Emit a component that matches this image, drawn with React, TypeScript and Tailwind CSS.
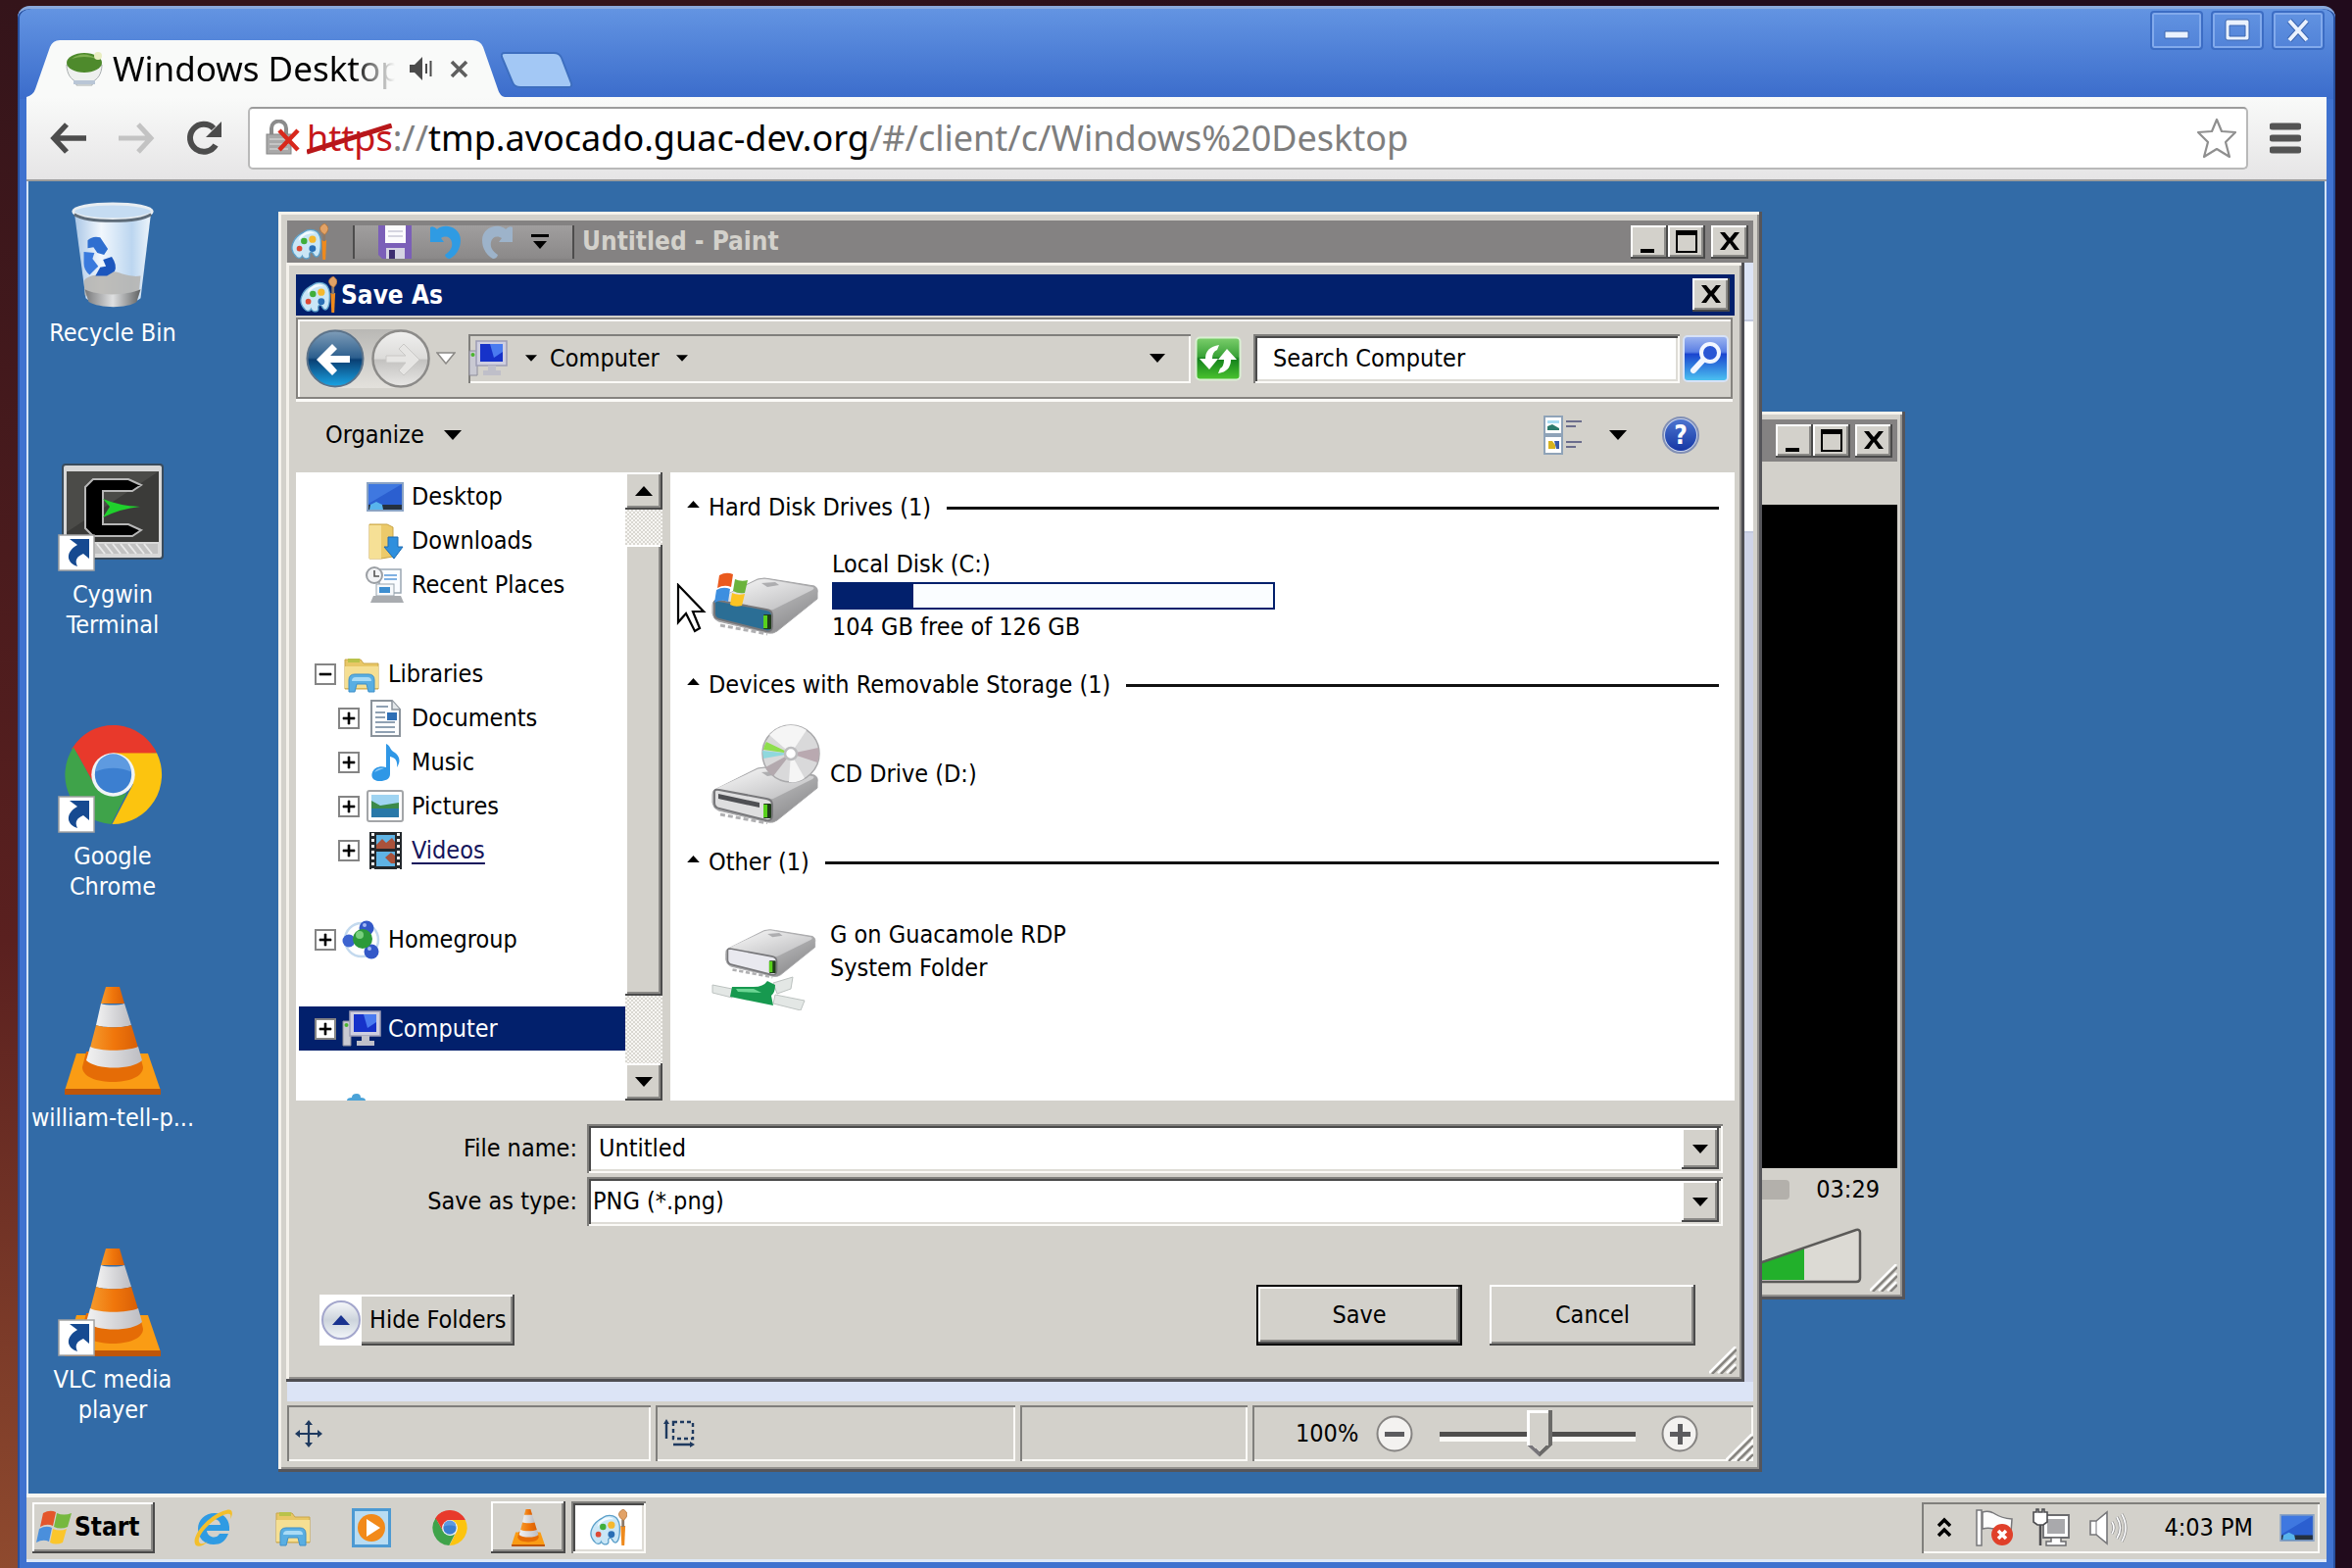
import React from "react";

const RAISED =
  "bg-[#d3d1cb] shadow-[inset_-2px_-2px_0_#4a4a4a,inset_2px_2px_0_#ffffff,inset_-4px_-4px_0_#8a8986]";
const SUNKEN = "shadow-[inset_2px_2px_0_#807f7c,inset_-2px_-2px_0_#fbfaf7]";
const FIELD =
  "bg-white shadow-[inset_2px_2px_0_#807f7c,inset_-2px_-2px_0_#fbfaf7,inset_4px_4px_0_#4a4a4a,inset_-4px_-4px_0_#dedcd6]";

function Caret({ up = false, w = 18, color = "#000" }: { up?: boolean; w?: number; color?: string }) {
  return (
    <svg width={w} height={Math.round(w * 0.56)} viewBox="0 0 18 10" className="shrink-0" aria-hidden="true">
      <path d={up ? "M9 0 18 10H0z" : "M0 0h18L9 10z"} fill={color} />
    </svg>
  );
}

function Grip() {
  return (
    <svg width="28" height="28" viewBox="0 0 28 28" aria-hidden="true">
      <g strokeWidth="2.4">
        <path d="M0 27 27 0M9 27 27 9M18 27 27 18" stroke="#fff" />
        <path d="M3 28 28 3M12 28 28 12M21 28 28 21" stroke="#85837f" />
      </g>
    </svg>
  );
}

function Palette({ size = 40 }: { size?: number }) {
  return (
    <svg width={size} height={size} viewBox="0 0 40 40" aria-hidden="true" className="shrink-0">
      <path
        d="M14 9c4-3 10-3 14 0 3 3 4 7 4 12s0 11-3 14c-2 2-4 0-5-2-1-2-3-3-4-1s1 4-1 5c-3 2-6 0-7-2-1 3-5 3-7 0C1 31 0 26 2 21 4 15 8 12 14 9z"
        fill="#c9e6f6"
        stroke="#5b9fc9"
        strokeWidth="1.4"
      />
      <path d="M13 11c4-3 9-3 13 0-6-1-13 1-18 8 0-3 2-6 5-8z" fill="#f3fbff" />
      <circle cx="14" cy="19" r="3.4" fill="#3fae3a" />
      <circle cx="23" cy="17" r="3.8" fill="#f5b82e" />
      <circle cx="9" cy="27" r="3" fill="#dd4a35" />
      <circle cx="23" cy="27" r="3.600" fill="#2a6fb5" />
      <path d="M33 18h5l-1 21h-3z" fill="#ee8a1d" />
      <path d="M34 11h3v8h-3z" fill="#8c7a6a" />
      <path d="M31 5c1-3 3-4 5-5 2 2 4 3 4 6-1 4-3 5-4 6-3-2-5-4-5-7z" fill="#e2a266" stroke="#b06f32" strokeWidth=".8" />
    </svg>
  );
}

function RecycleBin() {
  return (
    <svg width="86" height="108" viewBox="0 0 86 110" aria-hidden="true">
      <defs>
        <linearGradient id="bin" x1="0" x2="1">
          <stop offset="0" stopColor="#a9c6e6" />
          <stop offset=".35" stopColor="#f1f7fd" />
          <stop offset=".75" stopColor="#bcd6f0" />
          <stop offset="1" stopColor="#eef5fb" />
        </linearGradient>
        <linearGradient id="binFoot" x1="0" x2="1">
          <stop offset="0" stopColor="#77787a" />
          <stop offset=".5" stopColor="#dfe0e1" />
          <stop offset="1" stopColor="#606263" />
        </linearGradient>
      </defs>
      <path d="M3 10h80L72 100c-9 9-48 9-57 0z" fill="url(#bin)" />
      <path d="M13 82c6-8 18-5 26-9 9-3 16 6 33 4l-2 20c-10 6-46 6-56 0z" fill="#b5b3ae" opacity=".85" />
      <path d="M14 91c14 7 42 7 58 0l-4 13c-10 7-38 7-50 0z" fill="url(#binFoot)" />
      <ellipse cx="43" cy="10" rx="41" ry="8" fill="#c5dcf2" stroke="#e8edf1" strokeWidth="3" />
      <path d="M3 13c14 9 66 9 80 0" fill="none" stroke="#5d6b78" strokeWidth="3" />
      <path d="M17 40q5-5 13-3l8 12-4 6-7-2-4-6-6 1z" fill="#2f6fd0" />
      <path d="M13 52l11 1-2 6 6 8-9 9q-6-5-6-12z" fill="#3a7add" />
      <path d="M33 60l9-3q6 9 3 15l-8 5H25l5-9 6-1z" fill="#1c56bd" />
    </svg>
  );
}

function ShortcutBadge() {
  return (
    <svg width="38" height="38" viewBox="0 0 38 38" className="absolute bottom-0 left-0" aria-hidden="true">
      <rect x="1" y="1" width="36" height="36" fill="#fff" stroke="#a3a3a3" strokeWidth="1.5" />
      <path d="M12 5h20v20l-6-5c-7 3-9 7-6 13-10-3-14-14 0-22z" fill="#164a91" />
    </svg>
  );
}

function CygwinIcon() {
  return (
    <svg width="104" height="98" viewBox="0 0 104 98" aria-hidden="true">
      <rect x="1" y="1" width="102" height="96" rx="3" fill="#d8d8d8" stroke="#3a4b5c" strokeWidth="2" />
      <rect x="5" y="8" width="94" height="72" fill="#3b3b39" />
      <path d="M5 8h94L5 70z" fill="#4b4b48" />
      <path d="M34 82h64v10H34z" fill="#c2c2c2" />
      <path d="M36 82l8 10m0-10 8 10m0-10 8 10m0-10 8 10m0-10 8 10m0-10 8 10m0-10 8 10" stroke="#e9e9e9" strokeWidth="2" />
      <path d="M32 16h36l13 6-9 6H42v34h26l13 6-9 6H32l-8-8V24z" fill="#000" stroke="#b7b7b7" strokeWidth="2" />
      <path d="M42 36q16 7 38 8-20 2-38 11l7-11z" fill="#1fd12c" />
    </svg>
  );
}

function ChromeLogo({ size }: { size: number }) {
  return (
    <svg width={size} height={size} viewBox="0 0 100 100" aria-hidden="true">
      <path d="M50 50 8 24A50 50 0 0 1 93 26z" fill="#e8392b" />
      <path d="M50 28H94A50 50 0 0 1 49 100L70 60z" fill="#fcc40f" />
      <path d="M10 22 31 60C40 72 52 74 64 68L48 100A50 50 0 0 1 10 22z" fill="#3fa34a" />
      <path d="M10 22 31 60 29 44 50 28H94C84 8 66 0 50 0 34 0 18 8 10 22z" fill="#e8392b" />
      <circle cx="50" cy="50" r="22" fill="#f0f4f6" />
      <circle cx="50" cy="50" r="18.500" fill="#3c7fd0" />
      <path d="M32 47a18 18 0 0 1 36 0c-10-5-26-5-36 0z" fill="#5e9ae0" />
    </svg>
  );
}

function Cone({ w, h, id }: { w: number; h: number; id: string }) {
  return (
    <svg width={w} height={h} viewBox="0 0 98 110" aria-hidden="true">
      <defs>
        <linearGradient id={`${id}o`} x1="0" x2="1">
          <stop offset="0" stopColor="#f59a2c" />
          <stop offset=".5" stopColor="#f0760b" />
          <stop offset="1" stopColor="#d95f06" />
        </linearGradient>
        <linearGradient id={`${id}w`} x1="0" x2="1">
          <stop offset="0" stopColor="#f2f2f2" />
          <stop offset="1" stopColor="#bdbdc2" />
        </linearGradient>
      </defs>
      <path d="M12 68h73l13 38H0z" fill="#fa9c14" />
      <path d="M0 104h98v6H0z" fill="#bf5609" />
      <path d="M18 82c0 20 62 20 62 0l-4-16H22z" fill="#e56c06" />
      <path d="M42 0h14l5 17H37z" fill={`url(#${id}o)`} />
      <path d="M37 17c5 2 19 2 24 0l7 22c-8 3-29 3-36 0z" fill={`url(#${id}w)`} />
      <path d="M32 39c7 3 28 3 36 0l7 23c-12 5-39 5-49 0z" fill={`url(#${id}o)`} />
      <path d="M26 61c10 5 37 5 49 0l4 14c-10 10-47 10-57 0z" fill={`url(#${id}w)`} />
    </svg>
  );
}

function FolderGlyph({ kind }: { kind: "lib" | "down" }) {
  return (
    <svg width="40" height="40" viewBox="0 0 40 40" aria-hidden="true">
      {kind === "lib" ? (
        <>
          <path d="M3 5h16l3 4h15v26H3z" fill="#e8c766" stroke="#c9a548" />
          <path d="M6 4h12v4H6z" fill="#b9c24a" />
          <path d="M3 12h34v22H3z" fill="#f5df93" />
          <path d="M7 38V26q0-6 6-6h14q6 0 6 6v12h-6l-2-8H15l-2 8z" fill="#59aee2" stroke="#3c8fc9" />
          <path d="M10 27q0-4 4-4h12q4 0 4 4z" fill="#a9dbf6" />
        </>
      ) : (
        <>
          <path d="M4 3h18l6 3v30l-12 2H4z" fill="#ecca6a" stroke="#c9a548" />
          <path d="M4 4h12v34H4z" fill="#f6e096" />
          <path d="M23 16h10v10h5l-9 12-10-12h4z" fill="#2f8fdd" stroke="#1c6bb3" />
        </>
      )}
    </svg>
  );
}

function MonitorGlyph({ w = 38, h = 30 }: { w?: number; h?: number }) {
  return (
    <svg width={w} height={h} viewBox="0 0 38 30" aria-hidden="true">
      <rect x="1" y="1" width="36" height="28" fill="#2b5fd0" stroke="#8aa3c4" strokeWidth="2" />
      <path d="M2 2h34L2 22z" fill="#3f78e0" />
      <path d="M2 23h34v5H2z" fill="#25313f" />
      <path d="M3 28l1-5 6-3 6 3 1 5z" fill="#58b4ec" />
    </svg>
  );
}

function RecentGlyph() {
  return (
    <svg width="40" height="38" viewBox="0 0 40 38" aria-hidden="true">
      <path d="M14 3h22v24H14z" fill="#fafcff" stroke="#9aa6b3" strokeWidth="1.500" />
      <path d="M19 9h13M19 13h13" stroke="#7fb0e2" strokeWidth="2" />
      <rect x="11" y="18" width="18" height="12" fill="#f7f9fb" stroke="#98a4ae" />
      <rect x="14" y="21" width="11" height="6" fill="#3d8ed0" />
      <path d="M8 30h28l3 7H5z" fill="#a9acb0" />
      <circle cx="9" cy="9" r="8" fill="#f3f4f6" stroke="#9b9fa4" strokeWidth="2" />
      <path d="M9 4v6h5" stroke="#555" strokeWidth="1.600" fill="none" />
    </svg>
  );
}

function ComputerGlyph() {
  return (
    <svg width="40" height="40" viewBox="0 0 40 40" aria-hidden="true">
      <path d="M1 12h8v25H1z" fill="#c9c9d2" stroke="#8e8e9c" />
      <circle cx="4.500" cy="16" r="2" fill="#4bb52f" />
      <rect x="8" y="2" width="31" height="25" fill="#cfcfe0" stroke="#9d9db5" strokeWidth="1.500" />
      <rect x="12" y="5" width="23" height="18" fill="#1632c9" />
      <path d="M22 5h13v8l-9 6z" fill="#4a7bf0" />
      <path d="M20 27h8v5h5v5H15v-5h5z" fill="#bfbfc9" />
    </svg>
  );
}

function DocGlyph() {
  return (
    <svg width="40" height="40" viewBox="0 0 40 40" aria-hidden="true">
      <path d="M6 2h21l8 9v27H6z" fill="#fcfdfe" stroke="#8b939b" strokeWidth="2" />
      <path d="M27 2v9h8" fill="#e3e7ea" stroke="#8b939b" strokeWidth="1.500" />
      <path d="M11 8h12M10 14h10M10 19h10M10 24h20M10 29h20M10 34h20" stroke="#8fa1b3" strokeWidth="1.800" />
      <rect x="22" y="14" width="10" height="8" fill="#2f6fb5" />
    </svg>
  );
}

function MusicGlyph() {
  return (
    <svg width="40" height="40" viewBox="0 0 40 40" aria-hidden="true">
      <path d="M21 1c5 2 3 6 9 9 5 4 6 9 2 15 1-7-2-10-7-11v18c0 5-5 7-10 7-7 0-10-4-8-9 2-5 8-7 14-5z" fill="#2f97e6" />
      <path d="M9 30c2-4 6-5 10-4-4 1-7 3-10 4z" fill="#8ccaf7" />
    </svg>
  );
}

function PictureGlyph() {
  return (
    <svg width="40" height="34" viewBox="0 0 40 34" aria-hidden="true">
      <rect x="2" y="1" width="36" height="31" rx="2" fill="#fcfcfc" stroke="#a3a5a8" strokeWidth="2" />
      <rect x="6" y="5" width="28" height="23" fill="#9fd4f2" />
      <path d="M6 11l9 5 19-3v7H6z" fill="#3b8a4a" />
      <path d="M6 19h28v9H6z" fill="#2878a8" />
    </svg>
  );
}

function VideoGlyph() {
  return (
    <svg width="40" height="40" viewBox="0 0 40 40" aria-hidden="true">
      <rect x="4" y="1" width="33" height="38" fill="#23282c" />
      <rect x="11" y="4" width="19" height="14" fill="#5fb3e4" />
      <path d="M11 14l6-6 4 4 6-5 3 4v7H11z" fill="#a9523b" />
      <rect x="11" y="21" width="19" height="15" fill="#5fb3e4" />
      <path d="M20 27l6-5 4 3v8h-4z" fill="#a9523b" />
      <path d="M7.500 2v37M33.500 2v37" stroke="#f3f3f3" strokeWidth="3" strokeDasharray="3 3" />
    </svg>
  );
}

function HomegroupGlyph() {
  return (
    <svg width="40" height="40" viewBox="0 0 40 40" aria-hidden="true">
      <circle cx="20" cy="20" r="17" fill="none" stroke="#c3d9ee" strokeWidth="2.500" />
      <circle cx="25" cy="8" r="7.500" fill="#3358c8" />
      <circle cx="7" cy="21" r="6.500" fill="#3c63cf" />
      <circle cx="30" cy="32" r="7.500" fill="#3358c8" />
      <circle cx="21" cy="19" r="10" fill="#2c9a39" />
      <circle cx="18" cy="15" r="4" fill="#79d07e" />
      <circle cx="23" cy="5" r="2" fill="#a3b8f4" />
      <circle cx="28" cy="29" r="2" fill="#a3b8f4" />
    </svg>
  );
}

function DriveBody({ id, face }: { id: string; face: string }) {
  return (
    <>
      <defs>
        <linearGradient id={`${id}t`} x1="0" y1="0" x2="1" y2="1">
          <stop offset="0" stopColor="#fafafa" />
          <stop offset="1" stopColor="#b9b9bb" />
        </linearGradient>
        <linearGradient id={`${id}s`} x1="0" y1="0" x2="1" y2="1">
          <stop offset="0" stopColor="#e4e4e5" />
          <stop offset="1" stopColor="#7e7e80" />
        </linearGradient>
      </defs>
      <path d="M4 25 48 3q7-2 14 0l44 7q4 2 3 7v6L68 56q-4 3-9 2L8 46q-5-2-6-8v-8q0-4 2-5z" fill={`url(#${id}s)`} stroke="#a3a3a5" strokeWidth="1" />
      <path d="M5 24 48 4q7-2 14 0l42 7q3 1 0 3L66 33q-3 2-7 1z" fill={`url(#${id}t)`} />
      <path d="M52 7l14-1 4 3-12 2z" fill="#8b8b8d" opacity=".6" />
      <path d="M4 27q0-3 5-2l48 9q6 1 6 6v11q0 6-6 5L9 44q-5-1-5-6z" fill={face} stroke="#77777a" strokeWidth="2" />
      <path d="M10 50l48 9" stroke="#b0b0b2" strokeWidth="3" strokeDasharray="5 3" />
      <rect x="54" y="39" width="8" height="15" rx="1" fill="#1f3b1a" />
      <rect x="54" y="40" width="4" height="13" fill="#58d11c" />
    </>
  );
}

function LocalDiskIcon() {
  return (
    <svg width="112" height="66" viewBox="0 -4 112 66" aria-hidden="true">
      <DriveBody id="hd" face="#2b6e95" />
      <path d="M9 -1q7-4 14-1l-2 13q-7-3-14 1z" fill="#ea5a1e" />
      <path d="M25 3q6 3 13 1l-3 13q-7 1-12-2z" fill="#6bb33c" />
      <path d="M6 14q7-4 14-1l-2 13q-7-3-14 1z" fill="#3d8fe0" />
      <path d="M22 17q6 3 13 1l-3 12q-7 2-12-1z" fill="#fcc423" />
    </svg>
  );
}

function CdIcon() {
  return (
    <svg width="112" height="102" viewBox="0 0 112 102" aria-hidden="true">
      <g transform="translate(0 42)">
        <DriveBody id="cd" face="#dededf" />
        <path d="M8 29l42 9v5L8 34z" fill="#4f5054" />
      </g>
      <circle cx="82" cy="30" r="29" fill="#d9d9da" stroke="#a9a9ab" strokeWidth="1.500" />
      <path d="M82 30 60 11A29 29 0 0 1 98 6z" fill="#f5f5f5" />
      <path d="M82 30 54 26q1-5 3-8z" fill="#8ede4c" />
      <path d="M82 30 53 27l1 8z" fill="#8fd8dd" />
      <path d="M82 30 56 44q3 6 8 9z" fill="#b3a9ae" />
      <path d="M82 30 110 24q2 8-1 15z" fill="#b9a9b0" />
      <path d="M82 30 80 59q10 1 16-4z" fill="#f5f5f5" />
      <circle cx="82" cy="30" r="6" fill="#fff" stroke="#bdbdbf" strokeWidth="2.500" />
    </svg>
  );
}

function NetDriveIcon() {
  return (
    <svg width="112" height="84" viewBox="0 0 112 84" aria-hidden="true">
      <path d="M2 58l20 4v9L2 66zM66 68l30 6-4 10-28-7zM64 56l20-6-2 12-14 5z" fill="#e3e7e5" stroke="#bcc2c0" />
      <path d="M22 60h22q10 0 14-6l8 4q0 8-4 11l2 10-44-9z" fill="#17994f" />
      <path d="M26 62h18l8 4-24-1z" fill="#6bd694" />
      <g transform="translate(14 0) scale(.85)">
        <DriveBody id="nd" face="#e9e9ef" />
      </g>
    </svg>
  );
}

type WinButtonKind = "min" | "max" | "close";

function WinButton({ kind }: { kind: WinButtonKind }) {
  return (
    <button type="button" aria-label={kind} className={`${RAISED} flex h-[34px] w-[38px] items-center justify-center`}>
      <svg width="24" height="24" viewBox="0 0 24 24" aria-hidden="true">
        {kind === "min" && <path d="M3 19h14v4H3z" />}
        {kind === "max" && <path fillRule="evenodd" d="M1 0h22v23H1zM3 5v16h18V5z" />}
        {kind === "close" && <path d="M2 2h5l5 6 5-6h5l-7 9 7 9h-5l-5-7-5 7H2l7-9z" />}
      </svg>
    </button>
  );
}

function DesktopIcon({ label, shortcut, children }: { label: string[]; shortcut?: boolean; children: React.ReactNode }) {
  return (
    <li className="h-[267px]">
      <a href="#open" className="flex flex-col items-center">
        <span className="relative flex h-[110px] w-[112px] items-start justify-center">
          {children}
          {shortcut && <ShortcutBadge />}
        </span>
        <span className="mt-2 flex flex-col items-center leading-[31px] whitespace-nowrap text-white">
          {label.map((line) => (
            <span key={line}>{line}</span>
          ))}
        </span>
      </a>
    </li>
  );
}

function Expander({ open }: { open?: boolean }) {
  return (
    <button
      type="button"
      aria-label={open ? "Collapse" : "Expand"}
      className="flex h-[22px] w-[22px] shrink-0 items-center justify-center border-2 border-[#858585] bg-white"
    >
      <svg width="14" height="14" viewBox="0 0 14 14" aria-hidden="true">
        <path d={open ? "M1 6h12v2H1z" : "M1 6h12v2H1zM6 1h2v12H6z"} stroke="#000" strokeWidth=".6" />
      </svg>
    </button>
  );
}

type Row = { label: string; icon: React.ReactNode; level: 0 | 1; exp?: "open" | "closed"; state?: "hover" | "selected" } | null;

const TREE: Row[] = [
  { label: "Desktop", icon: <MonitorGlyph />, level: 1 },
  { label: "Downloads", icon: <FolderGlyph kind="down" />, level: 1 },
  { label: "Recent Places", icon: <RecentGlyph />, level: 1 },
  null,
  { label: "Libraries", icon: <FolderGlyph kind="lib" />, level: 0, exp: "open" },
  { label: "Documents", icon: <DocGlyph />, level: 1, exp: "closed" },
  { label: "Music", icon: <MusicGlyph />, level: 1, exp: "closed" },
  { label: "Pictures", icon: <PictureGlyph />, level: 1, exp: "closed" },
  { label: "Videos", icon: <VideoGlyph />, level: 1, exp: "closed", state: "hover" },
  null,
  { label: "Homegroup", icon: <HomegroupGlyph />, level: 0, exp: "closed" },
  null,
  { label: "Computer", icon: <ComputerGlyph />, level: 0, exp: "closed", state: "selected" },
];

function TreeRow({ row }: { row: Row }) {
  if (!row) return <li className="h-[46px]" aria-hidden="true" />;
  const tone =
    row.state === "selected" ? "bg-[#02206c] text-white" : row.state === "hover" ? "text-[#15155c] underline underline-offset-4" : "";
  return (
    <li className={`ml-[3px] flex h-[45px] items-center ${row.level === 0 ? "pl-4" : "pl-10"} ${tone}`}>
      <span className="flex w-[22px] shrink-0">{row.exp && <Expander open={row.exp === "open"} />}</span>
      <span className="ml-[6px] flex w-10 shrink-0 items-center justify-center">{row.icon}</span>
      <a href="#folder" className="ml-[7px] whitespace-nowrap">
        {row.label}
      </a>
    </li>
  );
}

function GroupHeader({ title }: { title: string }) {
  return (
    <h3 className="flex h-[34px] items-center">
      <span className="-mt-2 flex">
        <Caret up w={13} />
      </span>
      <span className="ml-[9px] whitespace-nowrap">{title}</span>
      <span className="ml-4 h-[3px] flex-1 bg-[#111]" />
    </h3>
  );
}

function ScrollBar() {
  const track =
    "bg-[repeating-conic-gradient(#d9d7d1_0_25%,#f8f7f4_0_50%)] bg-[length:4px_4px]";
  return (
    <div className="flex w-[38px] shrink-0 flex-col">
      <button type="button" aria-label="Scroll up" className={`${RAISED} flex h-[38px] items-center justify-center`}>
        <Caret up />
      </button>
      <div className={`h-9 ${track}`} />
      <div className={`${RAISED} h-[460px]`} />
      <div className={`flex-1 ${track}`} />
      <button type="button" aria-label="Scroll down" className={`${RAISED} flex h-[38px] items-center justify-center`}>
        <Caret />
      </button>
    </div>
  );
}

function DropArrow() {
  return (
    <span className={`${RAISED} pointer-events-none flex w-[38px] items-center justify-center`}>
      <Caret w={16} />
    </span>
  );
}

function NavBar() {
  return (
    <div className="mt-[2px] mr-[2px] flex h-[83px] items-center border-2 border-[#85837f] pl-2 shadow-[inset_2px_2px_0_#fbfaf7,0_3px_0_#fbfaf7]">
      <div className="flex items-center gap-[7px] rounded-full bg-gradient-to-b from-[#b9b8b5] to-[#e3e1dc]">
        <button type="button" aria-label="Back">
          <svg width="60" height="60" viewBox="0 0 60 60" aria-hidden="true">
            <defs>
              <linearGradient id="bk" x1="0" y1="0" x2="0" y2="1">
                <stop offset="0" stopColor="#7f9db8" />
                <stop offset=".48" stopColor="#2d5f8e" />
                <stop offset=".52" stopColor="#0a3f73" />
                <stop offset="1" stopColor="#19a5e6" />
              </linearGradient>
            </defs>
            <circle cx="30" cy="30" r="28.500" fill="url(#bk)" stroke="#5c738a" strokeWidth="2" />
            <path d="M11 31 27 15l5 5-7 7h20v7H25l7 8-5 5z" fill="#fff" />
          </svg>
        </button>
        <button type="button" aria-label="Forward">
          <svg width="60" height="60" viewBox="0 0 60 60" aria-hidden="true">
            <defs>
              <linearGradient id="fw" x1="0" y1="0" x2="0" y2="1">
                <stop offset="0" stopColor="#f0f0ef" />
                <stop offset=".5" stopColor="#dcdbd9" />
                <stop offset=".52" stopColor="#c3c2c0" />
                <stop offset="1" stopColor="#e8e7e5" />
              </linearGradient>
            </defs>
            <circle cx="30" cy="30" r="28.500" fill="url(#fw)" stroke="#8c8b89" strokeWidth="2.500" />
            <path d="M49 31 33 15l-5 5 7 7H15v7h20l-7 8 5 5z" fill="#e6e5e3" stroke="#c9c8c6" />
          </svg>
        </button>
      </div>
      <button type="button" aria-label="Recent locations" className="ml-[6px]">
        <svg width="20" height="13" viewBox="0 0 20 13" aria-hidden="true">
          <path d="M1 1h18L10 12z" fill="#fff" stroke="#8b8986" strokeWidth="1.500" />
        </svg>
      </button>
      <div className={`ml-[13px] flex h-[50px] flex-1 items-center ${SUNKEN}`}>
        <ComputerGlyph />
        <button type="button" aria-label="Locations" className="ml-[18px]">
          <Caret w={12} />
        </button>
        <button type="button" className="ml-[13px] flex items-center gap-[17px]">
          Computer
          <Caret w={12} />
        </button>
        <button type="button" aria-label="Previous locations" className="mr-[26px] ml-auto">
          <Caret w={16} />
        </button>
      </div>
      <button type="button" aria-label="Refresh" className="ml-1">
        <svg width="48" height="46" viewBox="0 0 48 46" aria-hidden="true">
          <defs>
            <linearGradient id="rf" x1="0" y1="0" x2="0" y2="1">
              <stop offset="0" stopColor="#7ccf6c" />
              <stop offset=".45" stopColor="#3aa238" />
              <stop offset=".5" stopColor="#13801c" />
              <stop offset="1" stopColor="#4bc52f" />
            </linearGradient>
          </defs>
          <rect x="1.500" y="1.500" width="45" height="43" rx="4" fill="url(#rf)" stroke="#d9efd2" strokeWidth="2" />
          <path d="M5 23h6q0-12 14-14l-2 5q-5 2-5 9h6l-9 11zM43 24h-6q0 12-13 14l2-5q4-2 4-9h-6l9-11z" fill="#fff" />
        </svg>
      </button>
      <div className={`ml-3 flex h-[50px] w-[435px] items-center ${FIELD}`}>
        <input aria-label="Search Computer" defaultValue="Search Computer" className="h-full w-full bg-transparent pl-5 outline-none" />
      </div>
      <button type="button" aria-label="Search" className="mr-[2px] ml-[3px]">
        <svg width="47" height="48" viewBox="0 0 47 48" aria-hidden="true">
          <defs>
            <linearGradient id="sr" x1="0" y1="0" x2="0" y2="1">
              <stop offset="0" stopColor="#9fb6f0" />
              <stop offset=".35" stopColor="#5b7fe4" />
              <stop offset=".4" stopColor="#1a45cf" />
              <stop offset="1" stopColor="#4dc5f2" />
            </linearGradient>
          </defs>
          <rect x="1" y="1" width="45" height="46" rx="4" fill="url(#sr)" stroke="#d7e2f6" strokeWidth="2" />
          <path d="M22 24 11 36" stroke="#f2f6ff" strokeWidth="6" strokeLinecap="round" />
          <circle cx="28" cy="18" r="9" fill="#2a56d4" stroke="#f2f6ff" strokeWidth="4" />
        </svg>
      </button>
    </div>
  );
}

function SaveAsDialog() {
  return (
    <section
      aria-label="Save As"
      className="absolute top-[52px] left-[8px] flex h-[1142px] w-[1488px] flex-col bg-[#d3d1cb] px-[10px] pt-[12px] pb-2 shadow-[inset_-3px_-3px_0_#4e4e52,inset_3px_3px_0_#f5f2ec,inset_-5px_-5px_0_#93918e]"
    >
      <header className="flex h-[42px] shrink-0 items-center bg-[#02206c] pr-[5px] pl-1 text-white">
        <Palette size={38} />
        <h2 className="ml-1 text-[26px] font-bold">Save As</h2>
        <span className="ml-auto flex">
          <WinButton kind="close" />
        </span>
      </header>
      <NavBar />
      <div className="mt-[3px] flex h-[72px] items-center pb-1 pl-[30px]">
        <button type="button" className="flex items-center gap-5">
          Organize
          <Caret w={18} />
        </button>
        <button type="button" aria-label="Change view" className="ml-auto flex items-center gap-[27px]">
          <svg width="40" height="40" viewBox="0 0 40 40" aria-hidden="true">
            <rect x="1" y="1" width="18" height="18" fill="#fff" stroke="#8fa3b8" strokeWidth="2" />
            <rect x="1" y="21" width="18" height="18" fill="#fff" stroke="#8fa3b8" strokeWidth="2" />
            <path d="M4 11l5-2 7 4v2H4z" fill="#2c7a6b" />
            <path d="M4 5h12v3H4z" fill="#a8dcf2" />
            <path d="M5 26h4l3 4v4H5z" fill="#d6b21f" />
            <path d="M11 26h5v8h-3z" fill="#3b5aa6" />
            <path d="M23 6h16M23 11h10M23 27h16M23 32h10" stroke="#6b6d8c" strokeWidth="2" />
          </svg>
          <Caret w={18} />
        </button>
        <button type="button" aria-label="Help" className="mr-9 ml-9 flex h-[38px] w-[38px] items-center justify-center rounded-full border-2 border-[#8290b5] bg-[#c9d4ec]">
          <span className="flex h-8 w-8 items-center justify-center rounded-full bg-gradient-to-b from-[#4d74cf] to-[#1636a4] text-[26px] leading-none font-bold text-white">
            ?
          </span>
        </button>
      </div>
      <div className="flex h-[641px] shrink-0">
        <nav aria-label="Folders" className="flex w-[374px] shrink-0 bg-white">
          <div className="flex flex-1 flex-col overflow-hidden">
            <ul className="mt-[2px]">
              {TREE.map((row, i) => (
                <TreeRow key={row ? row.label : `gap-${i}`} row={row} />
              ))}
            </ul>
            <svg width="22" height="8" viewBox="0 0 22 8" className="mt-auto ml-[50px]" aria-hidden="true">
              <path d="M2 8q0-3 5-3 0-4 5-4 4 0 4 4 5 0 5 3z" fill="#4ba3d8" />
            </svg>
          </div>
          <ScrollBar />
        </nav>
        <div className="ml-2 flex flex-1 flex-col bg-white pt-[19px] pr-4 pl-[17px]">
          <GroupHeader title="Hard Disk Drives (1)" />
          <div className="flex h-[147px] items-start pl-6 pt-[23px]">
            <div className="mt-[26px]">
              <LocalDiskIcon />
            </div>
            <div className="ml-3 w-[452px]">
              <div className="leading-[36px]">Local Disk (C:)</div>
              <div role="progressbar" aria-label="Used space" aria-valuenow={18} className="h-7 border-2 border-[#02206c] bg-[#fafdff]">
                <div className="h-full w-[18%] bg-[#02206c]" />
              </div>
              <div className="leading-[36px]">104 GB free of 126 GB</div>
            </div>
          </div>
          <GroupHeader title="Devices with Removable Storage (1)" />
          <div className="flex h-[147px] items-center pl-6">
            <CdIcon />
            <div className="ml-[10px]">CD Drive (D:)</div>
          </div>
          <GroupHeader title="Other (1)" />
          <div className="flex h-[147px] items-start pl-6 pt-10">
            <div className="mt-[10px]">
              <NetDriveIcon />
            </div>
            <div className="ml-[10px] leading-[34px]">
              <div>G on Guacamole RDP</div>
              <div>System Folder</div>
            </div>
          </div>
        </div>
      </div>
      <div className="mt-6 grid grid-cols-[287px_1fr] gap-x-[10px] gap-y-1 pr-[12px]">
        <label htmlFor="file-name" className="self-center text-right">
          File name:
        </label>
        <div className={`flex h-[50px] p-1 ${FIELD}`}>
          <input id="file-name" defaultValue="Untitled" className="min-w-0 flex-1 bg-transparent pl-2 outline-none" />
          <DropArrow />
        </div>
        <label htmlFor="file-type" className="self-center text-right">
          Save as type:
        </label>
        <div className={`flex h-[50px] p-1 ${FIELD}`}>
          <select id="file-type" className="min-w-0 flex-1 appearance-none bg-transparent pl-[2px] outline-none">
            <option>PNG (*.png)</option>
          </select>
          <DropArrow />
        </div>
      </div>
      <div className="mt-[60px] flex items-end pl-6">
        <button type="button" className={`flex h-[52px] items-center ${RAISED}`}>
          <span className="flex h-full w-[43px] items-center justify-center bg-white">
            <span className="flex h-10 w-10 items-center justify-center rounded-full border-2 border-[#a3a6cc] bg-gradient-to-b from-[#f4f6f9] via-[#cdd4dc] to-[#f0f4f8]">
              <Caret up w={18} color="#1a3390" />
            </span>
          </span>
          <span className="px-2">Hide Folders</span>
        </button>
        <button
          type="button"
          className="ml-auto h-[62px] w-[210px] border-2 border-black bg-[#d3d1cb] shadow-[inset_-2px_-2px_0_#4a4a4a,inset_2px_2px_0_#ffffff,inset_-4px_-4px_0_#8a8986]"
        >
          Save
        </button>
        <button type="button" className={`mr-10 ml-7 h-[62px] w-[210px] ${RAISED}`}>
          Cancel
        </button>
      </div>
      <span className="absolute right-2 bottom-2">
        <Grip />
      </span>
      <svg width="32" height="52" viewBox="0 0 32 52" className="absolute top-[327px] left-[398px]" aria-hidden="true">
        <path d="M2 2v38l8-9 9 18 5-3-7-17h11z" fill="#fff" stroke="#000" strokeWidth="2.200" />
      </svg>
    </section>
  );
}

function PaintWindow() {
  return (
    <section
      aria-label="Untitled - Paint"
      className="absolute top-[31px] left-[255px] flex h-[1286px] w-[1514px] flex-col bg-[#d3d1cb] px-[9px] pt-[9px] pb-[11px] shadow-[inset_-3px_-3px_0_#55555a,inset_3px_3px_0_#f5f2ec,inset_-5px_-5px_0_#93918e]"
    >
      <header className="flex h-[43px] shrink-0 items-center bg-[#848282] pr-[5px] pl-1">
        <Palette size={38} />
        <div className="ml-[25px] flex h-[34px] items-center border-r-2 border-l-2 border-[#4d4c4c] bg-gradient-to-b from-[#a09e9e] to-[#8b8989] px-6">
          <button type="button" aria-label="Save">
            <svg width="34" height="34" viewBox="0 0 34 34" aria-hidden="true">
              <path d="M0 0h34v34H4l-4-4z" fill="#7b5fb8" />
              <path d="M7 0h21v18H7z" fill="#fbfbfd" />
              <path d="M10 6h15M10 11h15" stroke="#c9c9d6" strokeWidth="1.500" />
              <path d="M8 23h19v11H8z" fill="#d5d3e2" />
              <path d="M11 25h6v9h-6z" fill="#3d2d70" />
            </svg>
          </button>
          <button type="button" aria-label="Undo" className="ml-[18px]">
            <svg width="34" height="34" viewBox="0 0 34 34" aria-hidden="true">
              <path d="M1 2q3-2 7 2C16-3 32 2 32 15c0 9-5 16-11 19q-4 0-5-4c6-4 8-8 7-13-1-5-6-7-11-4l3 4H1z" fill="#2f9be3" />
            </svg>
          </button>
          <button type="button" aria-label="Redo" className="ml-[18px]">
            <svg width="34" height="34" viewBox="0 0 34 34" aria-hidden="true">
              <path d="M33 2q-3-2-7 2C18-3 2 2 2 15c0 9 5 16 11 19q4 0 5-4c-6-4-8-8-7-13 1-5 6-7 11-4l-3 4h14z" fill="#9db3ca" />
            </svg>
          </button>
          <button type="button" aria-label="Customize toolbar" className="ml-[18px]">
            <svg width="18" height="16" viewBox="0 0 18 16" aria-hidden="true">
              <path d="M0 0h18v3H0zM2 7h14l-7 8z" />
            </svg>
          </button>
        </div>
        <h2 className="ml-[8px] text-[26px] font-bold text-[#d3d1cb]">Untitled - Paint</h2>
        <span className="ml-auto flex">
          <WinButton kind="min" />
          <WinButton kind="max" />
          <span className="ml-[6px] flex">
            <WinButton kind="close" />
          </span>
        </span>
      </header>
      <div className="flex flex-1 flex-col bg-[#cfd4e8]">
        <div className="h-[58px] bg-[#dce4f6]" />
        <div className="h-[218px] border-y-2 border-[#c3cadf] bg-white" />
        <div className="flex-1" />
        <div className="h-5 bg-[#dce4f6]" />
      </div>
      <footer className="flex h-[61px] shrink-0 gap-[5px] bg-[#d3d1cb] pt-1">
        <div className={`flex w-[371px] items-center pl-2 ${SUNKEN}`}>
          <svg width="28" height="28" viewBox="0 0 28 28" aria-hidden="true">
            <path d="M14 2v24M2 14h24" stroke="#1f3a5f" strokeWidth="2.200" />
            <path d="M14 0l4 5h-8zM14 28l4-5h-8zM0 14l5-4v8zM28 14l-5-4v8z" fill="#1f3a5f" />
          </svg>
        </div>
        <div className={`flex w-[367px] items-center pl-2 ${SUNKEN}`}>
          <svg width="32" height="30" viewBox="0 0 32 30" aria-hidden="true">
            <rect x="10" y="3" width="20" height="17" fill="none" stroke="#1f3a5f" strokeWidth="2.400" strokeDasharray="4 3" />
            <path d="M3 4v16M10 26h17" stroke="#1f3a5f" strokeWidth="2.400" />
            <path d="M3 0l3 5H0zM32 26l-5-3v6z" fill="#1f3a5f" />
          </svg>
        </div>
        <div className={`w-[232px] ${SUNKEN}`} />
        <div className={`relative flex flex-1 items-center pl-11 ${SUNKEN}`}>
          <output>100%</output>
          <button type="button" aria-label="Zoom out" className="ml-[18px]">
            <svg width="38" height="38" viewBox="0 0 38 38" aria-hidden="true">
              <circle cx="19" cy="19" r="17.500" fill="#f3f2f0" stroke="#868482" strokeWidth="2" />
              <path d="M9 17h20v5H9z" fill="#5c5c5f" />
            </svg>
          </button>
          <input
            type="range"
            aria-label="Zoom"
            defaultValue={51}
            className="ml-[27px] h-12 w-[200px] appearance-none bg-[linear-gradient(#4f4e4d,#4f4e4d),linear-gradient(#fbfaf7,#fbfaf7)] bg-[length:100%_5px,100%_10px] bg-[position:0_22px,0_22px] bg-no-repeat [&::-webkit-slider-thumb]:h-12 [&::-webkit-slider-thumb]:w-[26px] [&::-webkit-slider-thumb]:appearance-none [&::-webkit-slider-thumb]:bg-[#d3d1cb] [&::-webkit-slider-thumb]:bg-[linear-gradient(to_top_right,#fff_0_50%,#77757a_50%_72%,transparent_72%),linear-gradient(to_top_left,#fff_0_50%,#6b6a68_50%_75%,transparent_75%),linear-gradient(to_right,#fff_0_3px,transparent_3px_22px,#6b6a68_22px),linear-gradient(#fff,#fff)] [&::-webkit-slider-thumb]:bg-[length:13px_12px,13px_12px,100%_36px,100%_3px] [&::-webkit-slider-thumb]:bg-[position:0_100%,100%_100%,0_0,0_0] [&::-webkit-slider-thumb]:bg-no-repeat [&::-webkit-slider-thumb]:[clip-path:polygon(0_0,100%_0,100%_75%,50%_100%,0_75%)]"
          />
          <button type="button" aria-label="Zoom in" className="ml-[26px]">
            <svg width="38" height="38" viewBox="0 0 38 38" aria-hidden="true">
              <circle cx="19" cy="19" r="17.500" fill="#f3f2f0" stroke="#868482" strokeWidth="2" />
              <path d="M9 17h8V9h5v8h8v5h-8v8h-5v-8H9z" fill="#5c5c5f" />
            </svg>
          </button>
          <span className="absolute right-0 bottom-0">
            <Grip />
          </span>
        </div>
      </footer>
      <SaveAsDialog />
    </section>
  );
}

function PlayerWindow() {
  return (
    <section
      aria-label="Media player"
      className="absolute top-[235px] left-[1600px] flex h-[906px] w-[315px] flex-col bg-[#d3d1cb] p-[8px] shadow-[inset_-3px_-3px_0_#55555a,inset_3px_3px_0_#f5f2ec,inset_-5px_-5px_0_#93918e]"
    >
      <header className="flex h-[43px] shrink-0 items-center justify-end bg-[#848282] pr-[5px]">
        <WinButton kind="min" />
        <WinButton kind="max" />
        <span className="ml-[5px] flex">
          <WinButton kind="close" />
        </span>
      </header>
      <div className="h-[44px] shrink-0" />
      <div className="h-[677px] shrink-0 bg-black" />
      <div className="flex h-[44px] items-center justify-end pr-[18px]">
        <span className="h-5 w-[120px] rounded bg-[#b3b0ab]" />
        <time className="ml-[27px]">03:29</time>
      </div>
      <svg width="160" height="60" viewBox="0 0 160 60" className="mt-4 mr-9 self-end" aria-hidden="true">
        <path d="M0 54 158 2v52z" fill="#dcdad4" />
        <path d="M0 54 101 21v33z" fill="#22b02b" />
        <path d="M0 56 154 3q4-1 4 3v46q0 4-4 4z" fill="none" stroke="#5b5a58" strokeWidth="2.500" />
      </svg>
      <span className="absolute right-2 bottom-2">
        <Grip />
      </span>
    </section>
  );
}

function Taskbar() {
  return (
    <footer className="flex h-[70px] shrink-0 items-center border-t-4 border-b-[3px] border-t-[#f8f6f1] border-b-[#dfe9f7] bg-[#d3d1cb] pr-[7px] pb-[2px] pl-[6px]">
      <button type="button" className={`flex h-[52px] w-[125px] items-center pl-[3px] ${RAISED}`}>
        <svg width="38" height="36" viewBox="0 0 38 36" aria-hidden="true" className="shrink-0">
          <path d="M8 3q7-4 13-1l-3 14q-6-3-13 1z" fill="#e4562b" />
          <path d="M22 3q7 3 15 0l-4 14q-7 3-14 0z" fill="#76b83f" />
          <path d="M4 19q7-4 13-1l-3 14q-6-3-13 1z" fill="#4a8fdc" />
          <path d="M18 19q7 3 14 0l-4 14q-7 3-13 0z" fill="#fbc62c" />
        </svg>
        <span className="ml-[2px] text-[26px] font-bold">Start</span>
      </button>
      <button type="button" aria-label="Internet Explorer" className="ml-[39px]">
        <svg width="42" height="40" viewBox="0 0 42 40" aria-hidden="true">
          <path
            fillRule="evenodd"
            d="M22 5c10 0 16 7 15 18H14c1 7 10 9 13 3h9c-3 8-8 11-15 11C11 37 5 30 5 21S12 5 22 5zM14 17h14c-1-8-13-8-14 0z"
            fill="#2f9be3"
          />
          <path d="M3 38C-4 30 16 6 34 2c7-2 7 4 4 9 1-5 0-6-4-5C20 10 4 28 6 34c1 4 6 2 9 0-4 4-9 6-12 4z" fill="#f3bf2b" />
        </svg>
      </button>
      <button type="button" aria-label="Explorer" className="ml-[40px]">
        <FolderGlyph kind="lib" />
      </button>
      <button type="button" aria-label="Media Player" className="ml-[40px]">
        <svg width="40" height="40" viewBox="0 0 40 40" aria-hidden="true">
          <rect x="1.500" y="1.500" width="37" height="37" fill="#b9dcf2" stroke="#4d9ad3" strokeWidth="3" />
          <circle cx="20" cy="20" r="14" fill="#f28a1a" />
          <path d="M15 11v18l14-9z" fill="#fff" />
        </svg>
      </button>
      <button type="button" aria-label="Chrome" className="ml-[42px]">
        <ChromeLogo size={36} />
      </button>
      <button type="button" aria-label="VLC" className={`ml-6 flex h-[53px] w-[76px] items-center justify-center ${RAISED}`}>
        <Cone w={36} h={38} id="tb" />
      </button>
      <button type="button" aria-label="Paint" className={`ml-[6px] flex h-[53px] w-[76px] items-center justify-center ${FIELD}`}>
        <Palette size={38} />
      </button>
      <div className={`ml-auto flex h-[52px] items-center pr-[5px] pl-4 ${SUNKEN}`}>
        <svg width="14" height="22" viewBox="0 0 14 22" aria-hidden="true">
          <path d="M1 9l6-6 6 6M1 19l6-6 6 6" fill="none" stroke="#000" strokeWidth="3.500" />
        </svg>
        <svg width="40" height="40" viewBox="0 0 40 40" className="ml-6" aria-hidden="true">
          <path d="M2 2h5v36H2z" fill="#fff" stroke="#77777a" strokeWidth="1.500" />
          <path d="M8 4q7-2 13 2t17 5l-1 14q-8 1-15-3-7-3-14-1z" fill="#fcfcfc" stroke="#77777a" strokeWidth="1.500" />
          <circle cx="28" cy="27" r="11" fill="#e0402a" />
          <path d="M24 23l8 8M32 23l-8 8" stroke="#fff" strokeWidth="3.500" />
        </svg>
        <svg width="40" height="40" viewBox="0 0 40 40" className="ml-[18px]" aria-hidden="true">
          <path d="M12 7h26v23H12z" fill="#fff" stroke="#6c6c6f" strokeWidth="1.800" />
          <path d="M16 11h18v15H16z" fill="#a9a9ac" />
          <path d="M20 30h10v4h5v4H15v-4h5z" fill="#fff" stroke="#6c6c6f" strokeWidth="1.500" />
          <path d="M2 4h3V1h2v3h4V1h2v3h3v10l-4 3H6l-4-3z" fill="#fff" stroke="#4d4d50" strokeWidth="1.600" />
          <path d="M9 17v21" stroke="#4d4d50" strokeWidth="2.500" />
        </svg>
        <svg width="40" height="36" viewBox="0 0 40 36" className="ml-[18px]" aria-hidden="true">
          <path d="M2 11h6L19 2v32L8 25H2z" fill="#fff" stroke="#77777a" strokeWidth="1.600" />
          <path d="M8 11v14" stroke="#77777a" />
          <path d="M24 12q4 6 0 12M29 7q7 11 0 22M34 4q8 14 0 28" fill="none" stroke="#8b8b8d" strokeWidth="3" />
          <path d="M24 12q4 6 0 12M29 7q7 11 0 22M34 4q8 14 0 28" fill="none" stroke="#fff" strokeWidth="1.600" />
        </svg>
        <time className="ml-[37px]">4:03 PM</time>
        <span className="ml-[27px] flex">
          <MonitorGlyph w={36} h={28} />
        </span>
      </div>
    </footer>
  );
}

function BrowserFrame({ children }: { children: React.ReactNode }) {
  const frameBtn =
    "flex h-10 w-[54px] items-center justify-center rounded border-2 border-[#3c6dc4] shadow-[inset_0_0_0_2px_#82aaec]";
  return (
    <div className="flex min-h-0 flex-1 flex-col rounded-t-[12px] border-t-[3px] border-[#8aa9dc] bg-[#3f72cf] bg-gradient-to-b from-[#6394e2] to-[#3b6ccb] bg-[length:100%_92px] bg-no-repeat px-[9px] pb-[6px] shadow-[inset_2px_0_0_#27509f,inset_-2px_0_0_#27509f]">
      <header className="flex h-[90px] shrink-0 items-end justify-between">
        <div className="flex items-end">
          <div className="relative flex h-[58px] w-[488px] items-center">
            <svg viewBox="0 0 488 58" preserveAspectRatio="none" className="absolute inset-0 h-full w-full" aria-hidden="true">
              <path d="M0 58q7-2 9-8L24 7q3-7 10-7h421q8 0 11 7l15 43q2 7 7 8z" fill="#f9faf9" />
            </svg>
            <div className="relative flex w-full items-center pl-10">
              <svg width="38" height="36" viewBox="0 0 38 36" aria-hidden="true">
                <path d="M1 14h36c0 10-5 15-9 17l-1 4H11l-1-4C6 29 1 24 1 14z" fill="#eef0ee" stroke="#a9aeb0" />
                <path d="M8 30h22v4H8z" fill="#b9c6d6" />
                <ellipse cx="19" cy="12" rx="18" ry="10" fill="#4e8a2c" />
                <path d="M6 8q12-9 26 0-13-4-26 0z" fill="#7fb052" />
                <circle cx="33" cy="5" r="4" fill="#e9eec2" />
              </svg>
              <span className="ml-[10px] w-[288px] overflow-hidden bg-gradient-to-r from-black from-85% to-transparent bg-clip-text text-[35px] leading-[44px] whitespace-nowrap text-transparent font-['Noto_Sans','Open_Sans',sans-serif]">
                Windows Desktop
              </span>
              <svg width="24" height="24" viewBox="0 0 24 24" className="ml-[15px]" aria-hidden="true">
                <path d="M0 8h5l8-8v24l-8-8H0z" fill="#4b4b4b" />
                <path d="M17 7v10M21.500 4v16" stroke="#4b4b4b" strokeWidth="2" />
              </svg>
              <button type="button" aria-label="Close tab" className="ml-[17px]">
                <svg width="19" height="19" viewBox="0 0 19 19" aria-hidden="true">
                  <path d="M2 2l15 15M17 2 2 17" stroke="#5f5f5f" strokeWidth="3.600" />
                </svg>
              </button>
            </div>
          </div>
          <button type="button" aria-label="New tab" className="-ml-[4px] mb-[8px]">
            <svg width="74" height="38" viewBox="0 0 74 38" aria-hidden="true">
              <path d="M4 1h50q6 0 8 5l10 26q1 4-3 4H20q-6 0-8-5L1 5q-1-4 3-4z" fill="#a3c8f5" stroke="#3d6ebf" strokeWidth="2" />
            </svg>
          </button>
        </div>
        <div className="flex gap-2 self-start pt-[2px] pr-[2px]">
          <button type="button" aria-label="Minimize" className={frameBtn}>
            <svg width="26" height="24" viewBox="0 0 26 24" aria-hidden="true">
              <path d="M1 13h24v7H1z" fill="#eaf2ff" stroke="#3c66b0" />
            </svg>
          </button>
          <button type="button" aria-label="Maximize" className={frameBtn}>
            <svg width="26" height="24" viewBox="0 0 26 24" aria-hidden="true">
              <path fillRule="evenodd" d="M3 1h20q2 0 2 2v17q0 2-2 2H3q-2 0-2-2V3q0-2 2-2zM5 7v11h16V7z" fill="#eaf2ff" stroke="#3c66b0" />
            </svg>
          </button>
          <button type="button" aria-label="Close window" className={frameBtn}>
            <svg width="24" height="24" viewBox="0 0 24 24" aria-hidden="true">
              <path d="M3 2l18 20M21 2 3 22" stroke="#3c66b0" strokeWidth="6" />
              <path d="M3 2l18 20M21 2 3 22" stroke="#eaf2ff" strokeWidth="4" />
            </svg>
          </button>
        </div>
      </header>
      <div className="flex h-[86px] shrink-0 items-center border-b-2 border-[#9c9c9c] bg-gradient-to-b from-[#f9faf9] to-[#e6e5e6] pr-[26px] pl-6 text-[36px] font-['Noto_Sans','Open_Sans',sans-serif]">
        <button type="button" aria-label="Back">
          <svg width="38" height="32" viewBox="0 0 38 32" aria-hidden="true">
            <path d="M17 2 4 16l13 14M5 16h32" fill="none" stroke="#4c4c4c" strokeWidth="5.500" />
          </svg>
        </button>
        <button type="button" aria-label="Forward" className="ml-[31px]">
          <svg width="38" height="32" viewBox="0 0 38 32" aria-hidden="true">
            <path d="M21 2l13 14-13 14M33 16H1" fill="none" stroke="#c3c3c3" strokeWidth="5" />
          </svg>
        </button>
        <button type="button" aria-label="Reload" className="ml-[31px]">
          <svg width="38" height="36" viewBox="0 0 38 36" aria-hidden="true">
            <path d="M31 25A14 14 0 1 1 29 8" fill="none" stroke="#4c4c4c" strokeWidth="6" />
            <path d="M37 1v16H21z" fill="#4c4c4c" />
          </svg>
        </button>
        <div className="ml-[26px] flex h-[64px] flex-1 items-center rounded-[5px] border-2 border-[#b9b9b9] border-t-[#9b9b9b] bg-white pr-[9px] pl-4">
          <svg width="36" height="38" viewBox="0 0 36 38" aria-hidden="true">
            <path d="M6 16V9a7 7 0 0 1 15 0v7" fill="none" stroke="#8b8b8b" strokeWidth="4" />
            <rect x="1" y="15" width="25" height="20" fill="#a9a9a9" stroke="#868686" />
            <path d="M4 20h19M4 25h19M4 30h19" stroke="#c5c5c5" strokeWidth="2" />
            <path d="M14 11l19 20M33 11 14 31" stroke="#d8281c" strokeWidth="4.500" />
          </svg>
          <a href="#address" className="ml-[6px] flex whitespace-nowrap text-[#7e7e7e]">
            <span className="relative text-[#c5161b]">
              https
              <svg viewBox="0 0 88 32" preserveAspectRatio="none" className="absolute inset-x-0 top-3 h-8 w-full" aria-hidden="true">
                <path d="M0 29 87 2" stroke="#b8171a" strokeWidth="5" />
              </svg>
            </span>
            <span>://</span>
            <span className="text-black">tmp.avocado.guac-dev.org</span>
            <span>/#/client/c/Windows%20Desktop</span>
          </a>
          <button type="button" aria-label="Bookmark" className="ml-auto">
            <svg width="42" height="42" viewBox="0 0 42 42" aria-hidden="true">
              <path d="M21 2l5 12 14 1-10 10 4 15-13-8-13 8 4-15L2 15l14-1z" fill="#fff" stroke="#8f8f8f" strokeWidth="2.200" strokeLinejoin="round" />
            </svg>
          </button>
        </div>
        <button type="button" aria-label="Menu" className="ml-[22px]">
          <svg width="32" height="32" viewBox="0 0 32 32" aria-hidden="true">
            <path d="M3 4h26M3 16h26M3 28h26" stroke="#545454" strokeWidth="7" strokeLinecap="round" />
          </svg>
        </button>
      </div>
      {children}
    </div>
  );
}

export default function App() {
  return (
    <div className="flex h-screen w-full flex-col bg-[linear-gradient(to_right,transparent_30%,#210b1c_70%),linear-gradient(to_bottom,#34141a,#5a201f_60%,#8f4a2e)] pt-[6px] pr-[17px] pl-[18px] text-[25px] leading-normal text-black font-['DejaVu_Sans_Condensed','Noto_Sans',sans-serif]">
      <BrowserFrame>
        <main className="relative min-h-0 flex-1 overflow-hidden border-x-2 border-[#d6e4f5] bg-[#326ba7]">
          <ul className="flex w-[172px] flex-col pt-[21px]">
            <DesktopIcon label={["Recycle Bin"]}>
              <RecycleBin />
            </DesktopIcon>
            <DesktopIcon label={["Cygwin", "Terminal"]} shortcut>
              <CygwinIcon />
            </DesktopIcon>
            <DesktopIcon label={["Google", "Chrome"]} shortcut>
              <ChromeLogo size={101} />
            </DesktopIcon>
            <DesktopIcon label={["william-tell-p..."]}>
              <Cone w={98} h={110} id="wt" />
            </DesktopIcon>
            <DesktopIcon label={["VLC media", "player"]} shortcut>
              <Cone w={98} h={110} id="vl" />
            </DesktopIcon>
          </ul>
          <PlayerWindow />
          <PaintWindow />
        </main>
        <Taskbar />
      </BrowserFrame>
    </div>
  );
}
